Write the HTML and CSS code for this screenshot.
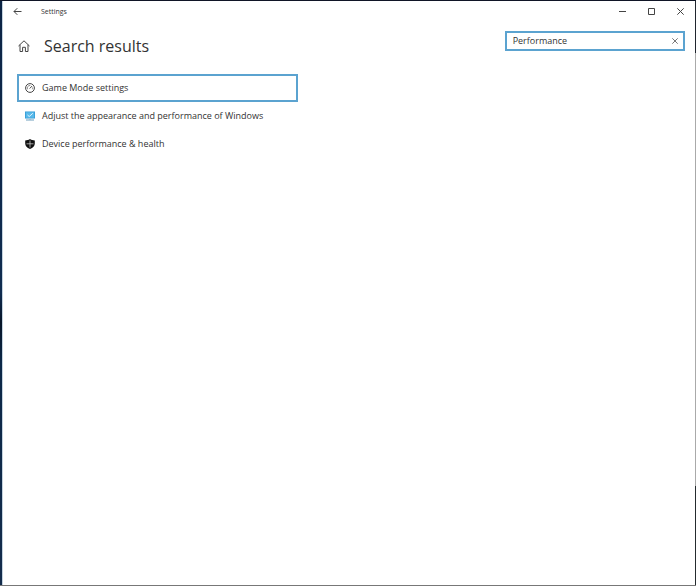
FILE: index.html
```
<!DOCTYPE html>
<html lang="en">
<head>
<meta charset="utf-8">
<meta name="viewport" content="width=device-width, initial-scale=1">
<title>Settings</title>
<link rel="stylesheet" href="styles.css">
</head>
<body>
<div class="window">
  <header class="titlebar">
    <button class="icon-button" type="button" aria-label="Back">
      <svg width="9" height="9" viewBox="0 0 9 9"><path d="M8.5 4.5H1M4.3 1.2 1 4.500l3.300 3.300"/></svg>
    </button>
    <span class="app-name">Settings</span>
    <div class="window-controls">
      <button class="icon-button" type="button" aria-label="Minimize">
        <svg width="7" height="7" viewBox="0 0 7 7"><path d="M0 3.5h7"/></svg>
      </button>
      <button class="icon-button" type="button" aria-label="Maximize">
        <svg width="7" height="7" viewBox="0 0 7 7"><path d="M.5.5h6v6h-6z"/></svg>
      </button>
      <button class="icon-button" type="button" aria-label="Close">
        <svg width="7" height="7" viewBox="0 0 7 7"><path d="m.3.3 6.4 6.4M6.7.3.3 6.7"/></svg>
      </button>
    </div>
  </header>
  <div class="page-head">
    <button class="icon-button home" type="button" aria-label="Home">
      <svg width="12" height="12" viewBox="0 0 12 12"><path d="M.5 6 6 .8 11.5 6M2 4.800v6.700h2.600V7.300h2.800v4.200H10V4.800"/></svg>
    </button>
    <h1 class="title">Search results</h1>
    <form class="search" role="search">
      <input class="search-input" type="text" aria-label="Find a setting" value="Performance">
      <button class="icon-button clear" type="button" aria-label="Clear search">
        <svg width="6" height="6" viewBox="0 0 6 6"><path d="m.3.3 5.400 5.400M5.700.3.3 5.700"/></svg>
      </button>
    </form>
  </div>
  <main>
    <ul class="results">
      <li><a class="result selected" href="#game-mode">
        <svg class="line" width="10" height="10" viewBox="0 0 10 10"><circle cx="5" cy="5" r="4.400"/><path d="M2.600 6.300A2.600 2.600 0 0 1 5.300 2.500M7.500 4.500A2.600 2.600 0 0 1 7.300 6.300" stroke-width=".6"/><path d="M4.700 5.500 7 3.100"/></svg>
        <span>Game Mode settings</span></a></li>
      <li><a class="result" href="#appearance">
        <svg width="10" height="10" viewBox="0 0 10 10"><path fill="#2f97d3" d="M0 .5h10v7H0z"/><path fill="#58b9ea" d="M.7 1.200h8.600v5.600H.7z"/><path fill="none" stroke="#e4f6ff" stroke-width="1" d="m2.500 4 1.700 1.500L7.800 2.300"/><path fill="#a9c9dc" d="M4 7.500h2v1H4z"/><path fill="#6f9fbd" d="M1 8.500h8v1H1z"/></svg>
        <span>Adjust the appearance and performance of Windows</span></a></li>
      <li><a class="result" href="#device-health">
        <svg width="10" height="10" viewBox="0 0 10 10"><path fill="#111" d="M5 0C6.500 1 8 1.400 9.800 1.400V4.500C9.800 7 8 9 5 10 2 9 .2 7 .2 4.500V1.400C2 1.400 3.500 1 5 0z"/><path fill="none" stroke="#ddd" stroke-width=".7" d="M5 1.500v7M1.500 4.800h7"/></svg>
        <span>Device performance &amp; health</span></a></li>
    </ul>
  </main>
</div>
</body>
</html>
```
FILE: styles.css
```
* {
  box-sizing: border-box;
}

/* The desktop shows as a thin edge round the window. */
body {
  display: flex;
  min-height: 100vh;
  margin: 0;
  padding: 1px 1px 1px 2px;
  background:
    linear-gradient(#101526, #101526) top / 100% 1px no-repeat,
    linear-gradient(#777, #777) bottom / 100% 1px no-repeat,
    linear-gradient(#0c2445, #102c50 50%, #071528 55%, #0c2848 62%, #142c4c) left / 2px 100% no-repeat,
    linear-gradient(#20252e 9%, #aaa 9%, #aaa 83%, #252b2e 83%) right / 1px 100% no-repeat;
  color: #333;
  font: 9px/12px "Open Sans", "Noto Sans", sans-serif;
}

.window {
  flex: 1;
  min-width: 0;
  padding: 0 10px 0 14px;
  border-left: 1px solid #c4d3df;
  background: #fff;
}

.titlebar {
  display: flex;
  align-items: center;
  height: 21px;
  margin-left: -7px;
}

.app-name {
  margin-left: 17px;
  font-size: 7px;
}

.icon-button {
  display: grid;
  place-items: center;
  min-width: 14px;
  height: 14px;
  padding: 0;
  border: 0;
  background: none;
}

.icon-button svg,
.line {
  fill: none;
  stroke: #444;
  stroke-width: 1;
}

.window-controls {
  display: flex;
  gap: 15px;
  margin-left: auto;
  margin-right: -2px;
}

.page-head {
  display: flex;
  align-items: center;
  height: 48px;
}

.title {
  margin: 0 0 0 13px;
  font-size: 16px;
  font-weight: 400;
  line-height: 24px;
}

.search {
  display: flex;
  align-items: center;
  width: 27%;
  min-width: 140px;
  height: 20px;
  margin: 0 0 10px auto;
  padding: 0 1px 0 6px;
  border: 2px solid #5ba3d0;
}

.search-input {
  flex: 1;
  min-width: 0;
  padding: 0;
  border: 0;
  outline: 0;
  background: none;
  color: inherit;
  font: inherit;
}

.clear svg {
  stroke: #777;
}

.results {
  width: 281px;
  max-width: 100%;
  margin: 4px 0 0;
  padding: 0;
  list-style: none;
}

.result {
  display: flex;
  align-items: center;
  gap: 7px;
  min-height: 28px;
  padding: 0 6px;
  border: 2px solid transparent;
  color: inherit;
  text-decoration: none;
}

.selected {
  border-color: #5ba3d0;
}
```
